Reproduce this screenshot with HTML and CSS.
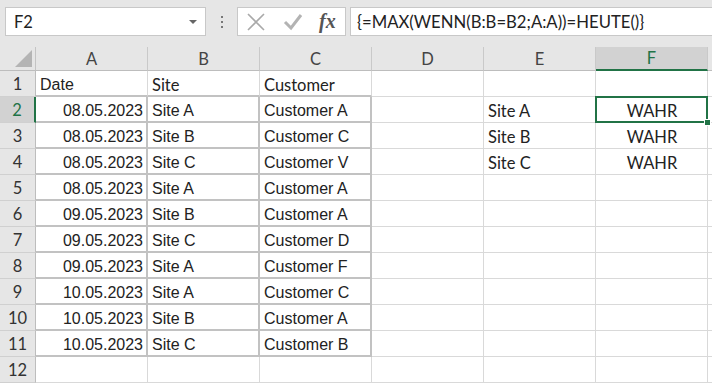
FILE: index.html
```html
<!DOCTYPE html>
<html lang="de">
<head>
    <meta charset="UTF-8">
    <title>Mappe1 - Excel</title>
    <link rel="stylesheet" href="styles.css">
</head>
<body>
    <div class="toolbar">
        <div class="namebox">
            <span>F2</span>
            <span class="dropArrow"></span>
        </div>
        <div class="grip">
            <svg width="4" height="14" viewBox="0 0 4 14"><rect x="1" y="1" width="2" height="2" fill="#777"/><rect x="1" y="6" width="2" height="2" fill="#777"/><rect x="1" y="11" width="2" height="2" fill="#777"/></svg>
        </div>
        <div class="fxButtons">
            <svg class="btnIcon" width="20" height="20" viewBox="0 0 20 20"><path d="M2 2 L18 18 M18 2 L2 18" stroke="#a9a9a9" stroke-width="1.6" fill="none"/></svg>
            <svg class="btnIcon" width="20" height="20" viewBox="0 0 20 20"><path d="M2 10 L8 16 L18 3" stroke="#b3b3b3" stroke-width="3" fill="none"/></svg>
            <span class="fxLabel">fx</span>
        </div>
        <div class="formula">{=MAX(WENN(B:B=B2;A:A))=HEUTE()}</div>
    </div>

    <div class="sheet">
        <div class="corner"><span class="cornerTri"></span></div>
        <div class="ch">A</div><div class="ch">B</div><div class="ch">C</div><div class="ch">D</div><div class="ch">E</div><div class="ch active">F</div><div class="ch"></div>

        <div class="rh">1</div>
        <div class="c bt">Date</div><div class="c bt cal">Site</div><div class="c bt cal">Customer</div><div class="c"></div><div class="c"></div><div class="c"></div><div class="c"></div>

        <div class="rh active">2</div>
        <div class="c b r">08.05.2023</div><div class="c b">Site A</div><div class="c b">Customer A</div><div class="c"></div><div class="c cal">Site A</div><div class="c cal ctr selected">WAHR</div><div class="c"></div>

        <div class="rh">3</div>
        <div class="c b r">08.05.2023</div><div class="c b">Site B</div><div class="c b">Customer C</div><div class="c"></div><div class="c cal">Site B</div><div class="c cal ctr">WAHR</div><div class="c"></div>

        <div class="rh">4</div>
        <div class="c b r">08.05.2023</div><div class="c b">Site C</div><div class="c b">Customer V</div><div class="c"></div><div class="c cal">Site C</div><div class="c cal ctr">WAHR</div><div class="c"></div>

        <div class="rh">5</div>
        <div class="c b r">08.05.2023</div><div class="c b">Site A</div><div class="c b">Customer A</div><div class="c"></div><div class="c"></div><div class="c"></div><div class="c"></div>

        <div class="rh">6</div>
        <div class="c b r">09.05.2023</div><div class="c b">Site B</div><div class="c b">Customer A</div><div class="c"></div><div class="c"></div><div class="c"></div><div class="c"></div>

        <div class="rh">7</div>
        <div class="c b r">09.05.2023</div><div class="c b">Site C</div><div class="c b">Customer D</div><div class="c"></div><div class="c"></div><div class="c"></div><div class="c"></div>

        <div class="rh">8</div>
        <div class="c b r">09.05.2023</div><div class="c b">Site A</div><div class="c b">Customer F</div><div class="c"></div><div class="c"></div><div class="c"></div><div class="c"></div>

        <div class="rh">9</div>
        <div class="c b r">10.05.2023</div><div class="c b">Site A</div><div class="c b">Customer C</div><div class="c"></div><div class="c"></div><div class="c"></div><div class="c"></div>

        <div class="rh">10</div>
        <div class="c b r">10.05.2023</div><div class="c b">Site B</div><div class="c b">Customer A</div><div class="c"></div><div class="c"></div><div class="c"></div><div class="c"></div>

        <div class="rh">11</div>
        <div class="c b r">10.05.2023</div><div class="c b">Site C</div><div class="c b">Customer B</div><div class="c"></div><div class="c"></div><div class="c"></div><div class="c"></div>

        <div class="rh">12</div>
        <div class="c"></div><div class="c"></div><div class="c"></div><div class="c"></div><div class="c"></div><div class="c"></div><div class="c"></div>
    </div>
</body>
</html>
```

FILE: styles.css
```css
*{
    margin: 0;
    padding: 0;
    box-sizing: border-box;
}
body{
    width: 712px;
    height: 384px;
    overflow: hidden;
    background-color: #fff;
    font-family: Lato, "Noto Sans", sans-serif;
    color: #222;
}
/* Namensfeld + Bearbeitungsleiste */
.toolbar{
    height: 47px;
    background-color: #e6e6e6;
    display: flex;
    align-items: flex-start;
    padding: 7px 0 0 5px;
}
.namebox{
    width: 201px;
    height: 29px;
    background-color: #fff;
    border: 1px solid #c8c8c8;
    display: flex;
    align-items: center;
    padding: 0 8px 0 8px;
    font-size: 16.5px;
}
.dropArrow{
    margin-left: auto;
    width: 0;
    height: 0;
    border-left: 4px solid transparent;
    border-right: 4px solid transparent;
    border-top: 4px solid #666;
}
.grip{
    width: 31px;
    height: 29px;
    display: flex;
    align-items: center;
    justify-content: center;
}
.fxButtons{
    width: 109px;
    height: 29px;
    background-color: #fff;
    border: 1px solid #c8c8c8;
    display: flex;
    align-items: center;
    padding-left: 8px;
    gap: 17px;
}
.btnIcon{
    display: block;
}
.fxLabel{
    font-family: "Liberation Serif", serif;
    font-style: italic;
    font-weight: bold;
    font-size: 20px;
    color: #555;
    margin-left: -1px;
}
.formula{
    flex: 1;
    height: 29px;
    margin-left: 4px;
    background-color: #fff;
    border: 1px solid #c8c8c8;
    border-right: none;
    display: flex;
    align-items: center;
    padding-left: 6px;
    font-size: 16.7px;
    white-space: nowrap;
}
/* Tabellenraster */
.sheet{
    display: grid;
    grid-template-columns: 36px repeat(6, 112px) 1fr;
    grid-template-rows: 24px repeat(12, 26px);
}
.corner{
    background-color: #e6e6e6;
    border-right: 1px solid #c4c4c4;
    border-bottom: 1px solid #bdbdbd;
    position: relative;
}
.cornerTri{
    position: absolute;
    right: 3px;
    bottom: 3px;
    width: 0;
    height: 0;
    border-left: 17px solid transparent;
    border-bottom: 17px solid #b4b4b4;
}
.ch{
    background-color: #e6e6e6;
    border-right: 1px solid #c9c9c9;
    border-bottom: 1px solid #bdbdbd;
    display: flex;
    align-items: center;
    justify-content: center;
    font-size: 16.5px;
    color: #444;
}
.ch.active{
    background-color: #d2d2d2;
    color: #217346;
    border-bottom: 2px solid #217346;
}
.rh{
    background-color: #e6e6e6;
    border-right: 1px solid #bdbdbd;
    border-bottom: 1px solid #d0d0d0;
    display: flex;
    align-items: center;
    justify-content: center;
    font-size: 16.5px;
    color: #333;
    padding-top: 1px;
}
.rh.active{
    background-color: #d2d2d2;
    color: #217346;
    border-right: 2px solid #217346;
}
.c{
    border-right: 1px solid #d9d9d9;
    border-bottom: 1px solid #d9d9d9;
    display: flex;
    align-items: center;
    padding: 3px 3px 0 4px;
    font-family: "Liberation Sans", Arial, sans-serif;
    font-size: 16px;
    color: #222;
    white-space: nowrap;
    overflow: hidden;
}
.c.cal{
    font-family: Lato, "Noto Sans", sans-serif;
    font-size: 16.5px;
}
.c.r{
    justify-content: flex-end;
}
.c.ctr{
    justify-content: center;
}
.c.b{
    border-right: 2px solid #c2c2c2;
    border-bottom: 2px solid #c2c2c2;
}
.c.bt{
    border-bottom: 2px solid #c2c2c2;
}
.c.selected{
    position: relative;
    overflow: visible;
}
.c.selected::after{
    content: "";
    position: absolute;
    left: -1px;
    top: -1px;
    right: -1px;
    bottom: -1px;
    border: 2px solid #217346;
}
.c.selected::before{
    content: "";
    position: absolute;
    right: -4px;
    bottom: -4px;
    width: 5px;
    height: 5px;
    background-color: #217346;
    border: 1px solid #fff;
    z-index: 1;
}
```
